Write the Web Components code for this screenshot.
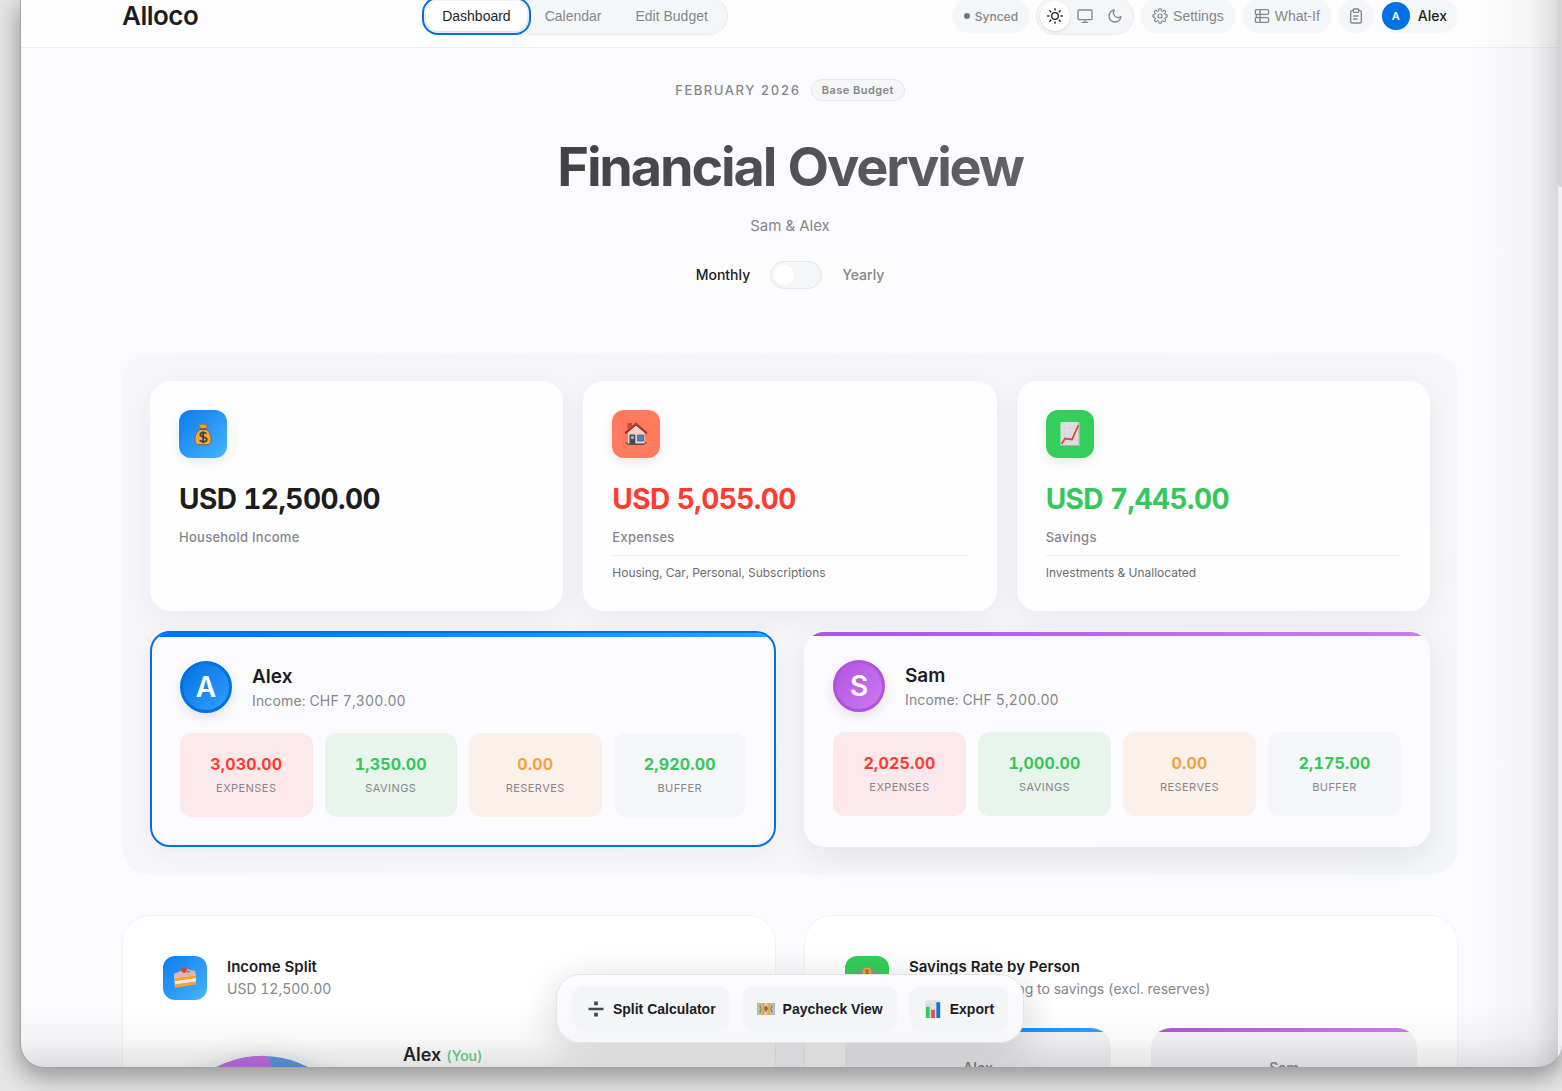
<!DOCTYPE html>
<html lang="en">
<head>
<meta charset="utf-8">
<title>Alloco</title>
<style>
  html {
    height: 100%;
  }
  body {
    --gutter: 101px;
    margin: 0;
    height: 100%;
    overflow: hidden;
    background: #e6e6e6;
    color: #1d1d1f;
    font-family: Inter, "Liberation Sans", sans-serif;
    font-size: 14px;
    font-variant-numeric: tabular-nums;
  }
</style>
</head>
<body>
<app-window>
  <app-header></app-header>
  <main>
    <page-hero heading="Financial Overview" period="February 2026" badge="Base Budget" people="Sam &amp; Alex"></page-hero>
    <summary-panel>
      <summary-card slot="totals" icon="moneybag" tone="blue" value="USD 12,500.00" label="Household Income"></summary-card>
      <summary-card slot="totals" icon="house" tone="red" value="USD 5,055.00" label="Expenses">Housing, Car, Personal, Subscriptions</summary-card>
      <summary-card slot="totals" icon="chart" tone="green" value="USD 7,445.00" label="Savings">Investments &amp; Unallocated</summary-card>
      <person-card slot="people" name="Alex" income="CHF 7,300.00" tone="blue" current>
        <stat-tile tone="expenses" value="3,030.00">Expenses</stat-tile>
        <stat-tile tone="savings" value="1,350.00">Savings</stat-tile>
        <stat-tile tone="reserves" value="0.00">Reserves</stat-tile>
        <stat-tile tone="buffer" value="2,920.00">Buffer</stat-tile>
      </person-card>
      <person-card slot="people" name="Sam" income="CHF 5,200.00" tone="purple">
        <stat-tile tone="expenses" value="2,025.00">Expenses</stat-tile>
        <stat-tile tone="savings" value="1,000.00">Savings</stat-tile>
        <stat-tile tone="reserves" value="0.00">Reserves</stat-tile>
        <stat-tile tone="buffer" value="2,175.00">Buffer</stat-tile>
      </person-card>
    </summary-panel>
    <chart-grid>
      <chart-card icon="cake" tone="blue" heading="Income Split" sub="USD 12,500.00">
        <income-split></income-split>
      </chart-card>
      <chart-card icon="bank" tone="green" heading="Savings Rate by Person" sub="% of income going to savings (excl. reserves)">
        <savings-rates></savings-rates>
      </chart-card>
    </chart-grid>
  </main>
  <quick-actions slot="overlay"></quick-actions>
</app-window>

<script>
const ICONS = {
  sun: `<svg viewBox="0 0 24 24" fill="none" stroke="currentColor" stroke-width="2" stroke-linecap="round"><circle cx="12" cy="12" r="5"/><path d="M12 1v2M12 21v2M4.2 4.2l1.4 1.4M18.4 18.4l1.4 1.4M1 12h2M21 12h2M4.2 19.8l1.4-1.4M18.4 5.6l1.4-1.4"/></svg>`,
  monitor: `<svg viewBox="0 0 24 24" fill="none" stroke="currentColor" stroke-width="2" stroke-linecap="round" stroke-linejoin="round"><rect x="1.500" y="3" width="21" height="14.500" rx="1.500"/><path d="M8 21.500h8M12 17.500v4"/></svg>`,
  moon: `<svg viewBox="0 0 24 24" fill="none" stroke="currentColor" stroke-width="2" stroke-linecap="round" stroke-linejoin="round"><path d="M21 12.800A9 9 0 1 1 11.200 3 7 7 0 0 0 21 12.800z"/></svg>`,
  gear: `<svg viewBox="0 0 24 24" fill="none" stroke="currentColor" stroke-width="1.800" stroke-linejoin="round"><circle cx="12" cy="12" r="3"/><path d="M19.400 15a1.650 1.650 0 0 0 .33 1.820l.06.06a2 2 0 1 1-2.830 2.830l-.06-.06a1.650 1.650 0 0 0-2.800 1.170V21a2 2 0 0 1-4 0v-.09a1.650 1.650 0 0 0-2.900-1.180l-.06.06a2 2 0 1 1-2.830-2.830l.06-.06A1.650 1.650 0 0 0 3.090 14H3a2 2 0 0 1 0-4h.09a1.650 1.650 0 0 0 1.180-2.900l-.06-.06a2 2 0 1 1 2.830-2.830l.06.06A1.650 1.650 0 0 0 10 3.090V3a2 2 0 0 1 4 0v.09a1.650 1.650 0 0 0 2.900 1.180l.06-.06a2 2 0 1 1 2.830 2.830l-.06.06A1.650 1.650 0 0 0 20.910 10H21a2 2 0 0 1 0 4h-.09a1.650 1.650 0 0 0-1.510 1z"/></svg>`,
  whatif: `<svg viewBox="0 0 24 24" fill="none" stroke="currentColor" stroke-width="2"><rect x="2" y="2.500" width="20" height="7" rx="2"/><rect x="2" y="14.500" width="20" height="7" rx="2"/><path d="M9 2.500v19M3.500 9.500v5"/></svg>`,
  clipboard: `<svg viewBox="0 0 24 24" fill="none" stroke="currentColor" stroke-width="2" stroke-linecap="round" stroke-linejoin="round"><path d="M16 4h2a2 2 0 0 1 2 2v14.500a2 2 0 0 1-2 2H6a2 2 0 0 1-2-2V6a2 2 0 0 1 2-2h2"/><rect x="8" y="1.500" width="8" height="5" rx="1"/><path d="M8.500 12h7M8.500 16.500h5"/></svg>`,
  moneybag: `<svg viewBox="0 0 24 24"><path d="M7.500 1.500l3 1.500L12 1.800l1.700 1.400 3-1.500-2 5.200h-5z" fill="#f5a42e" stroke="#9a6531" stroke-width=".6"/><path d="M9.300 7h5.600c3.800 3 5.700 7.200 5.200 11.500-.3 3-1.800 4.200-4 4.200H8c-2.300 0-3.800-1.200-4.100-4.200C3.500 14.200 5.500 10 9.300 7z" fill="#f2a63b" stroke="#755334" stroke-width=".8"/><path d="M9 7.200h6" stroke="#754c2a" stroke-width="1.400"/><path d="M15.500 11.600c-1-1.500-6.300-1.800-6.300 1.100 0 3 6.600 1.600 6.600 4.700 0 3-5.800 2.800-7 .9M12.200 9.200v12" fill="none" stroke="#3b4046" stroke-width="1.700"/></svg>`,
  house: `<svg viewBox="0 0 24 24"><path d="M4 10.500L12 3l8.500 8v11H4z" fill="#f5cfbf"/><path d="M3.500 1h4.500v4l-4.500 4z" fill="#d8433a"/><path d="M1 11L12 1.800 23 11" fill="none" stroke="#cf3a36" stroke-width="2.200"/><path d="M1 12L12 3l11 9" fill="none" stroke="#433b3e" stroke-width=".9"/><path d="M5.500 12.500h5.800V23H5.500z" fill="#464b55"/><path d="M7 14h3v3H7z" fill="#77aee8"/><path d="M13.500 13h6v6h-6z" fill="#4187d8" stroke="#555b66" stroke-width=".8"/><path d="M1 23h22v-1.500H1zM1 20.500h2.500V23H1zM20.500 20.500H23V23h-2.500z" fill="#3f5460"/></svg>`,
  chart: `<svg viewBox="0 0 24 24"><path d="M2.500 0h19v24h-19z" fill="#dedfe1"/><path d="M2.500 23.500h19M21 0v24" stroke="#aaa" fill="none"/><path d="M7 0v24M12 0v24M17 0v24M2.500 6h19M2.500 12h19M2.500 18h19" stroke="#cbcccf" stroke-width=".5"/><path d="M3.500 22L7 16.500l7 1L20.500 3" fill="none" stroke="#e1463f" stroke-width="1.800"/></svg>`,
  cake: `<svg viewBox="0 0 24 24"><path d="M1 8L15 3.500q7 1 8 6v8.500L2 21.500z" fill="#f7d0c0"/><path d="M1 8L12 3l10 2 1 4.500-21 2z" fill="#dcb7ae"/><path d="M2 12l21-2.500v2.800L2 15.300zM2 18.300l21-3v3L2 22z" fill="#f2a132"/><path d="M2 15.300l21-3v3L2 18.300z" fill="#f9e4dc"/><circle cx="11" cy="4" r="2.800" fill="#dd3f39"/><path d="M13 4.500l5 .5-3 2z" fill="#8f8283"/></svg>`,
  bank: `<svg viewBox="0 0 24 24"><path d="M0 7L12 0l12 7v3H0z" fill="#8d9694"/><path d="M3 10h18v11H3z" fill="#c6cac9"/><path d="M5 11v10M10 11v10M14 11v10M19 11v10" stroke="#888f8f" stroke-width="2"/><circle cx="12" cy="6" r="4.500" fill="#f0a930"/><path d="M13.500 4.500c-3-1.500-4 1-1.500 1.500s1.500 3-1.500 1.500" fill="none" stroke="#624e24"/><path d="M1 23h22v-2H1z" fill="#818988"/></svg>`,
  divide: `<svg viewBox="0 0 24 24" fill="#4a4a4d"><path d="M2 10.200h20v3.600H2zM9.500 2h5v5h-5zM9.500 17h5v5h-5z"/></svg>`,
  cash: `<svg viewBox="0 0 24 24"><path d="M0 4h24v16H0z" fill="#a6a8a9"/><path d="M1.500 5.500h21v13h-21z" fill="none" stroke="#d6d7d7"/><ellipse cx="12" cy="12" rx="9" ry="6" fill="#c9cbcb"/><path d="M4 8q3 4 0 8M20 8q-3 4 0 8" fill="none" stroke="#77797a" stroke-width="1.500"/><path d="M7 4h10v16H7z" fill="#f3c5ab"/><path d="M7 4h3v16H7zM14 4h3v16h-3z" fill="#f4a429"/><path d="M14 10q-4-2-4 .5t3.500 1.500-3.500 2M12 8v8" fill="none" stroke="#555" stroke-width="1.200"/></svg>`,
  bars: `<svg viewBox="0 0 24 24"><path d="M2 0h20v24H2z" fill="#e3e4e6"/><path d="M2 6h20M2 12h20M2 18h20M8.500 0v24M15 0v24" stroke="#cfd0d2" stroke-width=".6"/><path d="M2.500 9h5v15h-5z" fill="#35c858"/><path d="M9.500 13h5v11h-5z" fill="#e84b4b"/><path d="M16.500 3h5v21h-5z" fill="#0876e5"/></svg>`,
};

class UiElement extends HTMLElement {
  constructor() {
    super();
    this.shadow = this.attachShadow({ mode: "open" });
  }

  connectedCallback() {
    this.shadow.innerHTML = this.template();
  }

  attr(name) {
    return (this.getAttribute(name) || "").replace(/&/g, "&amp;");
  }
}

class AppWindow extends UiElement {
  template() {
    return `
      <style>
        :host {
          display: block;
          position: relative;
          box-sizing: border-box;
          height: calc(100% - 23px);
          margin-left: 20px;
          overflow: hidden;
          border: 1px solid #a4a4a6;
          border-width: 0 0 1px 1px;
          border-radius: 0 0 24px 24px;
          background: #fbfbfd;
          box-shadow: 0 8px 24px 2px rgba(0, 0, 0, 0.34);
        }
        .content {
          margin-right: 3px;
        }
        .shade {
          position: absolute;
          inset: 0;
          pointer-events: none;
          background:
            linear-gradient(to top, rgba(60, 60, 65, 0.15), rgba(60, 60, 65, 0.04) 28px, transparent 64px),
            linear-gradient(to left, rgba(60, 60, 65, 0.22), rgba(60, 60, 65, 0.14) 10px, rgba(60, 60, 65, 0.04) 32px, transparent 90px);
        }
        .track {
          position: absolute;
          inset: 0 0 0 auto;
          width: 4px;
          background: #f0f1f3;
        }
        .thumb {
          height: 187px;
          border-radius: 0 0 0 3px;
          background: #d4d4d6;
        }
        .overlay {
          position: absolute;
          left: 0;
          right: 3px;
          bottom: 24px;
          display: flex;
          justify-content: center;
        }
      </style>
      <div class="content"><slot></slot></div>
      <div class="shade"></div>
      <div class="track"><div class="thumb"></div></div>
      <div class="overlay"><slot name="overlay"></slot></div>
    `;
  }
}

class UiIcon extends UiElement {
  template() {
    return `
      <style>
        :host {
          display: inline-block;
          flex: none;
          width: var(--icon-size, 16px);
          height: var(--icon-size, 16px);
        }
        svg {
          display: block;
          width: 100%;
          height: 100%;
        }
      </style>
      ${ICONS[this.getAttribute("name")]}
    `;
  }
}

class AppHeader extends UiElement {
  template() {
    return `
      <style>
        :host {
          display: flex;
          align-items: center;
          justify-content: space-between;
          height: 32px;
          padding: 0 var(--gutter) 15px;
          border-bottom: 1px solid #eeeeef;
          background: #fdfdfd;
        }
        .logo {
          font-size: 26px;
          line-height: 32px;
          font-weight: 600;
          letter-spacing: -0.02em;
        }
        button {
          display: flex;
          align-items: center;
          justify-content: center;
          gap: 5px;
          border: 0;
          margin: 0;
          background: none;
          color: #86868b;
          font: 14px/16px "Liberation Sans", Arial, sans-serif;
        }
        nav, .theme {
          display: flex;
          padding: 3px;
          border: 1px solid #ebebed;
          border-radius: 20px;
          background: #f5f6f8;
        }
        nav {
          gap: 2px;
        }
        nav button {
          height: 30px;
          padding: 0 16px;
          border-radius: 15px;
        }
        button.active {
          background: #fff;
          color: #1d1d1f;
          box-shadow: 0 1px 3px rgba(0, 0, 0, 0.12);
        }
        nav button.active {
          outline: 2px solid #0071e3;
          outline-offset: 2px;
          border-radius: 12px;
        }
        .actions {
          display: flex;
          align-items: center;
          gap: 6px;
        }
        .pill {
          height: 34px;
          padding: 0 12px;
          border-radius: 17px;
          background: #f5f6f8;
        }
        .sync {
          display: flex;
          align-items: center;
          gap: 5px;
          color: #86868b;
          font-size: 12px;
          font-weight: 500;
        }
        .sync::before {
          content: "";
          width: 6px;
          height: 6px;
          border-radius: 50%;
          background: #77777b;
        }
        .theme button {
          width: 30px;
          height: 30px;
          padding: 0;
          border-radius: 50%;
        }
        .clip {
          padding: 0 10px;
        }
        .user {
          gap: 8px;
          padding: 0 11px 0 2px;
          color: #1d1d1f;
          font: 500 14px/16px Inter, sans-serif;
        }
        .user span {
          width: 28px;
          border-radius: 50%;
          background: #0071e3;
          color: #fff;
          font-size: 11px;
          font-weight: 600;
          line-height: 28px;
        }
      </style>
      <div class="logo">Alloco</div>
      <nav>
        <button type="button" class="active">Dashboard</button>
        <button type="button">Calendar</button>
        <button type="button">Edit Budget</button>
      </nav>
      <div class="actions">
        <div class="pill sync">Synced</div>
        <div class="theme">
          <button type="button" class="active" aria-label="Light"><ui-icon name="sun"></ui-icon></button>
          <button type="button" aria-label="System"><ui-icon name="monitor"></ui-icon></button>
          <button type="button" aria-label="Dark"><ui-icon name="moon"></ui-icon></button>
        </div>
        <button type="button" class="pill"><ui-icon name="gear"></ui-icon>Settings</button>
        <button type="button" class="pill"><ui-icon name="whatif"></ui-icon>What-If</button>
        <button type="button" class="pill clip" aria-label="Notes"><ui-icon name="clipboard"></ui-icon></button>
        <button type="button" class="pill user"><span>A</span>Alex</button>
      </div>
    `;
  }
}

class PageHero extends UiElement {
  template() {
    return `
      <style>
        :host {
          display: flex;
          flex-direction: column;
          align-items: center;
          padding: 31px var(--gutter) 60px;
        }
        .period {
          display: flex;
          align-items: center;
          gap: 10px;
          color: #86868b;
          font-size: 13px;
          font-weight: 500;
          letter-spacing: 0.12em;
          text-transform: uppercase;
        }
        .badge {
          padding: 0 10px;
          border: 1px solid #e6e7e9;
          border-radius: 11px;
          background: #f5f6f8;
          font-size: 11px;
          line-height: 20px;
          font-weight: 600;
          letter-spacing: 0.04em;
          text-transform: none;
        }
        h1 {
          margin: 35px 0 16px;
          padding: 0 4px;
          font-size: 54px;
          line-height: 62px;
          font-weight: 700;
          letter-spacing: -0.04em;
          background: linear-gradient(135deg, #3f3f41, #656569);
          -webkit-background-clip: text;
          background-clip: text;
          color: transparent;
        }
        .people {
          color: #86868b;
          font-size: 15px;
          line-height: 24px;
        }
        .toggle {
          display: flex;
          align-items: center;
          gap: 20px;
          margin-top: 19px;
          padding: 4px 16px;
          border-radius: 18px;
          background: #fcfcfd;
          color: #86868b;
          line-height: 18px;
          font-weight: 500;
        }
        .toggle .on {
          color: #1d1d1f;
        }
        input {
          appearance: none;
          display: flex;
          align-items: center;
          box-sizing: border-box;
          width: 52px;
          height: 28px;
          margin: 0;
          padding: 3px;
          border: 1px solid #e6e7e9;
          border-radius: 14px;
          background: #f5f6f8;
        }
        input::before {
          content: "";
          width: 20px;
          height: 20px;
          border-radius: 50%;
          background: #fff;
        }
        input:checked {
          justify-content: flex-end;
        }
      </style>
      <div class="period"><span>${this.attr("period")}</span><span class="badge">${this.attr("badge")}</span></div>
      <h1>${this.attr("heading")}</h1>
      <div class="people">${this.attr("people")}</div>
      <div class="toggle">
        <span class="on">Monthly</span>
        <input type="checkbox" role="switch" id="yearly">
        <label for="yearly">Yearly</label>
      </div>
    `;
  }
}

class IconBadge extends UiElement {
  template() {
    return `
      <style>
        :host {
          display: flex;
          flex: none;
          align-items: center;
          justify-content: center;
          width: 48px;
          height: 48px;
          border-radius: 12px;
          background: linear-gradient(135deg, #0a7cf0, #48b4ff);
          box-shadow: 0 4px 12px rgba(0, 0, 0, 0.08);
          --icon-size: 24px;
        }
        :host([tone="red"]) {
          background: #ff7a5f;
        }
        :host([tone="green"]) {
          background: #34ce5a;
        }
      </style>
      <ui-icon name="${this.getAttribute("icon")}"></ui-icon>
    `;
  }
}

class SummaryPanel extends UiElement {
  template() {
    return `
      <style>
        :host {
          display: flex;
          flex-direction: column;
          gap: 20px;
          margin: 0 var(--gutter);
          padding: 28px;
          border-radius: 28px;
          background: linear-gradient(135deg, #f6f6fb, #f7f7fa 60%, #f5f6f7);
        }
        .totals {
          display: grid;
          grid-template-columns: repeat(3, 1fr);
          gap: 20px;
        }
        .people {
          display: grid;
          grid-template-columns: repeat(2, 1fr);
          gap: 28px;
        }
      </style>
      <div class="totals"><slot name="totals"></slot></div>
      <div class="people"><slot name="people"></slot></div>
    `;
  }
}

class SummaryCard extends UiElement {
  template() {
    return `
      <style>
        :host {
          padding: 28px;
          border: 1px solid #fdfdfe;
          border-radius: 20px;
          background: #fdfdfd;
          box-shadow: 0 8px 32px rgba(30, 30, 50, 0.06);
        }
        .value {
          margin-top: 24px;
          font-size: 28px;
          line-height: 34px;
          font-weight: 700;
          letter-spacing: -0.02em;
        }
        :host([tone="red"]) .value {
          color: #ff3b30;
        }
        :host([tone="green"]) .value {
          color: #34c759;
        }
        .label {
          margin-top: 12px;
          color: #86868b;
          font-size: 13px;
          line-height: 18px;
          font-weight: 500;
          letter-spacing: 0.02em;
        }
        .note {
          margin-top: 9px;
          padding-top: 8px;
          border-top: 1px solid #ededf0;
          color: #6e6e73;
          font-size: 12px;
          line-height: 18px;
        }
      </style>
      <icon-badge icon="${this.getAttribute("icon")}" tone="${this.getAttribute("tone")}"></icon-badge>
      <div class="value">${this.attr("value")}</div>
      <div class="label">${this.attr("label")}</div>
      ${this.textContent ? `<div class="note"><slot></slot></div>` : ""}
    `;
  }
}

class PersonCard extends UiElement {
  template() {
    return `
      <style>
        :host {
          --from: #0071e3;
          --to: #34a0ff;
          position: relative;
          padding: 28px;
          overflow: hidden;
          border: 1px solid #fdfdfe;
          border-radius: 20px;
          background: #fbfbfd;
          box-shadow: 0 10px 32px rgba(30, 30, 50, 0.08);
        }
        :host([tone="purple"]) {
          --from: #af52de;
          --to: #d07cf2;
        }
        :host([current]) {
          border: 2px solid #0071e3;
          box-shadow: 0 6px 24px rgba(30, 30, 50, 0.05);
        }
        .bar {
          position: absolute;
          inset: 0 0 auto;
          height: 4px;
          background: linear-gradient(to right, var(--from), var(--to));
        }
        .who {
          display: flex;
          align-items: center;
          gap: 20px;
          margin-bottom: 20px;
        }
        .avatar {
          box-sizing: border-box;
          width: 52px;
          height: 52px;
          border: 3px solid var(--from);
          border-radius: 50%;
          background: linear-gradient(135deg, var(--from), var(--to)) border-box;
          box-shadow: 0 4px 12px rgba(0, 0, 0, 0.1);
          color: #fff;
          font-size: 28px;
          line-height: 46px;
          font-weight: 600;
          text-align: center;
        }
        .name {
          font-size: 19px;
          line-height: 26px;
          font-weight: 600;
        }
        .income {
          margin-top: 2px;
          color: #86868b;
          font-size: 14px;
          line-height: 18px;
          letter-spacing: 0.01em;
        }
        .stats {
          display: grid;
          grid-template-columns: repeat(4, 1fr);
          gap: 12px;
        }
      </style>
      <div class="bar"></div>
      <div class="who">
        <div class="avatar">${this.attr("name")[0]}</div>
        <div>
          <div class="name">${this.attr("name")}</div>
          <div class="income">Income: ${this.attr("income")}</div>
        </div>
      </div>
      <div class="stats"><slot></slot></div>
    `;
  }
}

class StatTile extends UiElement {
  template() {
    return `
      <style>
        :host {
          display: flex;
          flex-direction: column;
          align-items: center;
          gap: 4px;
          padding: 20px 0;
          border-radius: 12px;
          background: #f5f6f8;
        }
        :host([tone="expenses"]) {
          background: #fce9eb;
        }
        :host([tone="savings"]) {
          background: #e8f5ed;
        }
        :host([tone="reserves"]) {
          background: #fcf0ea;
        }
        .value {
          color: #34c759;
          font-size: 16px;
          line-height: 22px;
          font-weight: 700;
          letter-spacing: 0.01em;
        }
        :host([tone="expenses"]) .value {
          color: #ff3b30;
        }
        :host([tone="reserves"]) .value {
          color: #f2a33a;
        }
        .label {
          color: #86868b;
          font-size: 11px;
          line-height: 18px;
          letter-spacing: 0.04em;
          text-transform: uppercase;
        }
      </style>
      <div class="value">${this.attr("value")}</div>
      <div class="label"><slot></slot></div>
    `;
  }
}

class ChartGrid extends UiElement {
  template() {
    return `
      <style>
        :host {
          display: grid;
          grid-template-columns: repeat(2, 1fr);
          gap: 28px;
          margin: 40px var(--gutter) 0;
        }
      </style>
      <slot></slot>
    `;
  }
}

class ChartCard extends UiElement {
  template() {
    return `
      <style>
        :host {
          min-height: 340px;
          padding: 40px;
          border: 1px solid #f3f3f6;
          border-radius: 28px;
          background: #fff;
        }
        header {
          display: flex;
          gap: 20px;
          margin-bottom: 28px;
        }
        icon-badge {
          width: 44px;
          height: 44px;
          box-shadow: none;
        }
        h2, p {
          margin: 0;
          font-size: 15px;
          line-height: 22px;
          font-weight: 600;
        }
        p {
          color: #86868b;
          font-size: 14px;
          font-weight: 400;
        }
      </style>
      <header>
        <icon-badge icon="${this.getAttribute("icon")}" tone="${this.getAttribute("tone")}"></icon-badge>
        <div>
          <h2>${this.attr("heading")}</h2>
          <p>${this.attr("sub")}</p>
        </div>
      </header>
      <slot></slot>
    `;
  }
}

class IncomeSplit extends UiElement {
  template() {
    return `
      <style>
        :host {
          display: flex;
          align-items: flex-start;
          gap: 40px;
        }
        svg {
          width: 200px;
          height: 200px;
          margin-top: 26px;
          filter: drop-shadow(0 2px 12px rgba(0, 0, 0, 0.15));
        }
        .name {
          margin-top: 15px;
          font-size: 18px;
          line-height: 24px;
          font-weight: 600;
        }
        small {
          color: #5ccf78;
          font-size: 14px;
          font-weight: 500;
        }
      </style>
      <svg viewBox="0 0 200 200" fill="none" stroke-width="34">
        <circle cx="100" cy="100" r="81" stroke="#5294dd"/>
        <path d="M100 181A81 81 0 0 1 97 19" stroke="#bd68e2"/>
        <path d="M92 2.500q8-1 11-.5 3 1 5 8v26H92z" fill="#bd68e2"/>
      </svg>
      <div class="name">Alex <small>(You)</small></div>
    `;
  }
}

class SavingsRates extends UiElement {
  template() {
    return `
      <style>
        :host {
          display: grid;
          grid-template-columns: repeat(2, 1fr);
          gap: 40px;
        }
        .rate {
          position: relative;
          height: 140px;
          padding-top: 28px;
          overflow: hidden;
          border-radius: 20px;
          background: #f3f3f6;
          color: #86868b;
          font-size: 14px;
          line-height: 24px;
          font-weight: 600;
          text-align: center;
        }
        .rate::before {
          content: "";
          position: absolute;
          inset: 0 0 auto;
          height: 4px;
          background: linear-gradient(to right, #0071e3, #34a0ff);
        }
        .sam::before {
          background: linear-gradient(to right, #af52de, #d07cf2);
        }
      </style>
      <div class="rate">Alex</div>
      <div class="rate sam">Sam</div>
    `;
  }
}

class QuickActions extends UiElement {
  template() {
    return `
      <style>
        :host {
          display: flex;
          gap: 12px;
          padding: 11px 15px;
          border: 1px solid #e4e4e7;
          border-radius: 24px;
          background: linear-gradient(#fcfcfe, #f7f7f9);
          box-shadow: 0 8px 40px rgba(0, 0, 0, 0.16);
        }
        button {
          display: flex;
          align-items: center;
          gap: 8px;
          height: 45px;
          margin: 0;
          padding: 0 14px 0 15px;
          border: 0;
          border-radius: 12px;
          background: #f4f5f7;
          color: #1d1d1f;
          font: bold 14px/16px "Liberation Sans", Arial, sans-serif;
          --icon-size: 18px;
        }
      </style>
      <button type="button"><ui-icon name="divide"></ui-icon>Split Calculator</button>
      <button type="button"><ui-icon name="cash"></ui-icon>Paycheck View</button>
      <button type="button"><ui-icon name="bars"></ui-icon>Export</button>
    `;
  }
}

window.customElements.define("ui-icon", UiIcon);
window.customElements.define("icon-badge", IconBadge);
window.customElements.define("app-window", AppWindow);
window.customElements.define("app-header", AppHeader);
window.customElements.define("page-hero", PageHero);
window.customElements.define("summary-panel", SummaryPanel);
window.customElements.define("summary-card", SummaryCard);
window.customElements.define("person-card", PersonCard);
window.customElements.define("stat-tile", StatTile);
window.customElements.define("chart-grid", ChartGrid);
window.customElements.define("chart-card", ChartCard);
window.customElements.define("income-split", IncomeSplit);
window.customElements.define("savings-rates", SavingsRates);
window.customElements.define("quick-actions", QuickActions);
</script>
</body>
</html>
